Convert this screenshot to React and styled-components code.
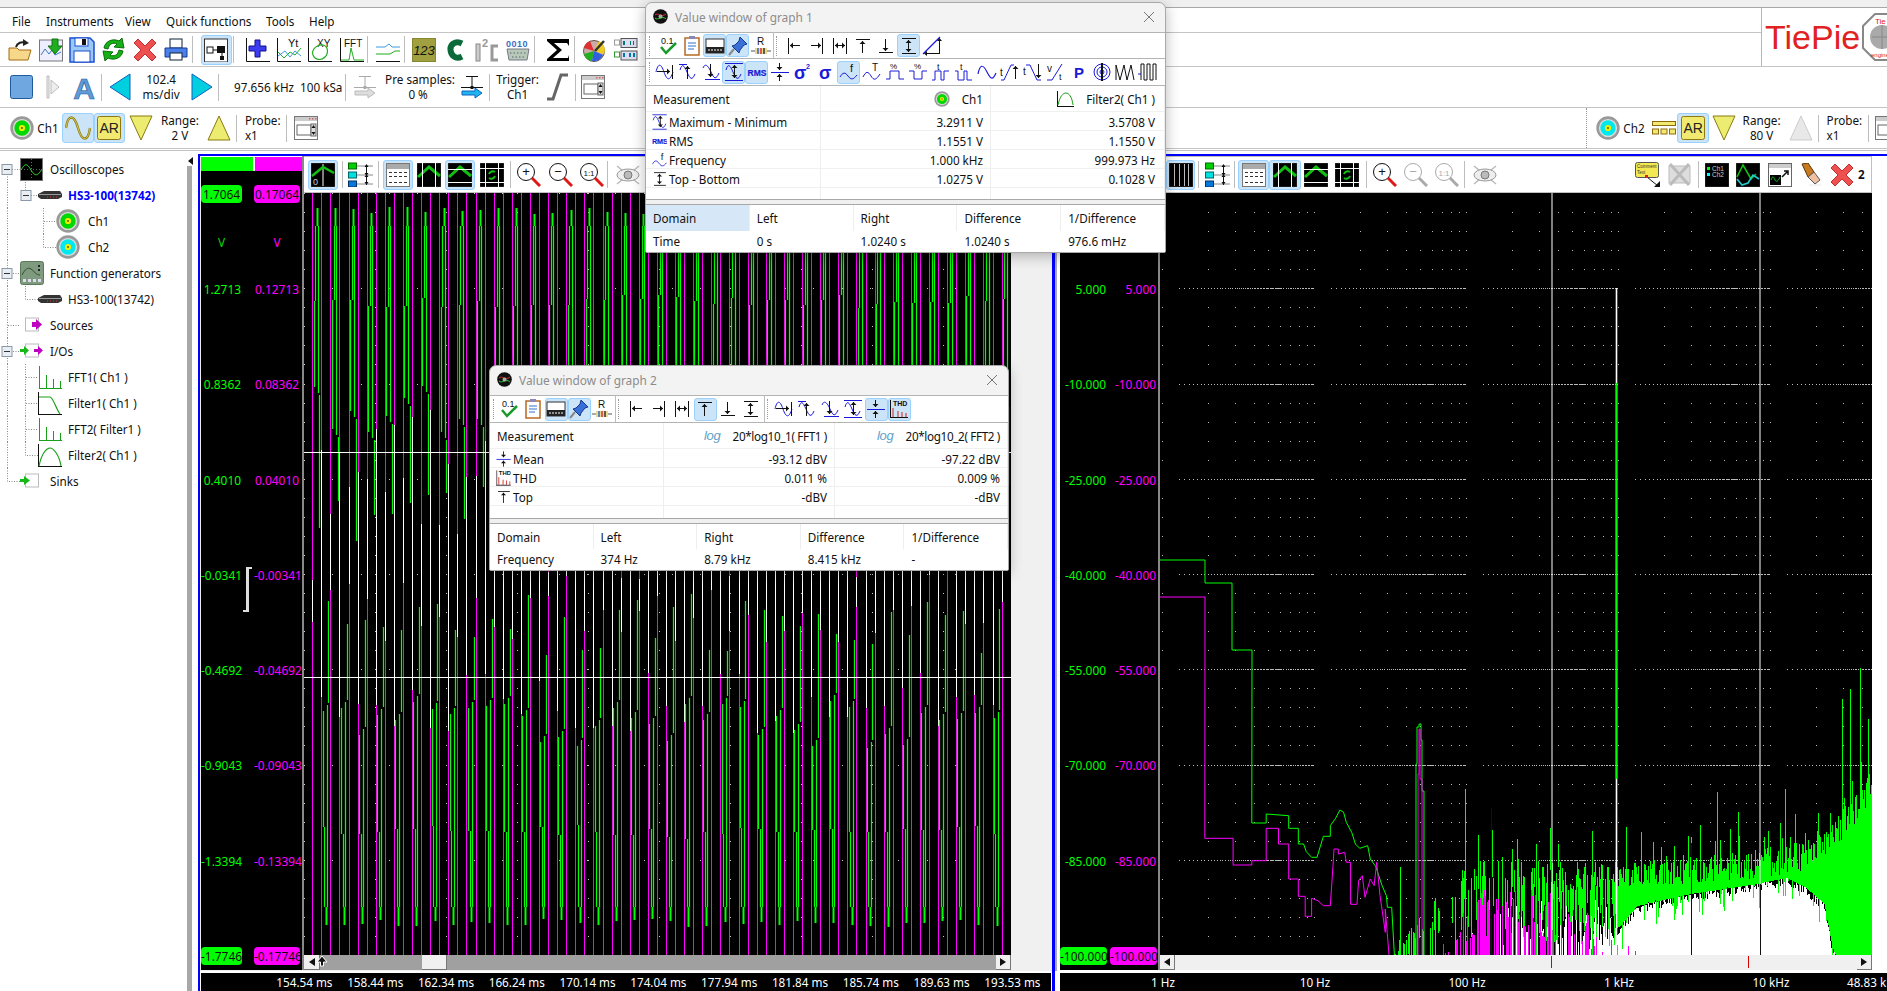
import React from 'react'
import styled, { createGlobalStyle } from 'styled-components'

const GlobalStyle = createGlobalStyle`
  * { box-sizing: border-box; }
  html, body { margin: 0; padding: 0; background: #fff; }
  body { width: 1887px; height: 991px; overflow: hidden; font: 11.7px "Noto Sans", "Open Sans", sans-serif; color: #111; }
  svg text { font-family: "Liberation Sans", sans-serif; }
`

// ---- small drawing helpers ----
const Svg = styled.svg`
  display: block;
  flex: none;
`
const I = ({ s = 24, w = s, h = s, children }) => (
  <Svg width={w} height={h} viewBox={`0 0 ${w} ${h}`} fill="none">{children}</Svg>
)
const BLUE = '#1a1ad8'
const arrowV = (x, y1, y2, c = '#111') => {
  const d = y2 > y1 ? -3 : 3
  return <g key={`v${x}${y1}${y2}`}><path stroke={c} d={`M${x + .5} ${y1}V${y2}`} /><path fill={c} d={`M${x - 2.5} ${y2 + d}H${x + 3.5}L${x + .5} ${y2}z`} /></g>
}
const arrowH = (y, x1, x2, c = '#111') => {
  const d = x2 > x1 ? -3 : 3
  return <g key={`h${y}${x1}${x2}`}><path stroke={c} d={`M${x1} ${y + .5}H${x2}`} /><path fill={c} d={`M${x2 + d} ${y - 2.5}V${y + 3.5}L${x2} ${y + .5}z`} /></g>
}

const Knob = ({ c, s = 24 }) => (
  <I s={s}>
    <circle cx={s / 2} cy={s / 2} r={s / 2 - .3} fill="#999" />
    <circle cx={s / 2} cy={s / 2} r={s * .38} fill="#ddd" />
    <circle cx={s / 2} cy={s / 2} r={s * .32} fill={c} />
    <circle cx={s / 2} cy={s / 2} r={s * .13} fill="#ee0" />
    <circle cx={s / 2} cy={s / 2} r={s * .04} fill="#550" />
  </I>
)
const WinIcon = () => (
  <I s={25}>
    <rect x=".5" y=".5" width="23" height="23" fill="#fff" stroke="#777" />
    <rect x="1" y="1" width="22" height="4" fill="#ccc" />
    <path fill="#c66" d="M15 2h1.5v1.5H15zM18 2h1.5v1.5H18zM21 2h1.5v1.5H21z" />
    <rect x="3" y="9" width="14" height="10" stroke="#666" />
    <rect x="17" y="8" width="5" height="12" fill="#ddd" stroke="#666" />
    <path fill="#111" d="M19.5 9l2 3h-4zM19.5 19l-2-3h4z" />
  </I>
)
const ScopeT = ({ blue }) => (
  <I s={24}>
    <path stroke={blue ? '#111' : '#aaa'} d="M6 1.5h12M12 2v11" />
    <path stroke={blue ? '#111' : '#aaa'} d="M1 12.5h22" />
    <rect x="10.5" y="11" width="3" height="3" fill={blue ? '#111' : '#aaa'} />
    <path fill={blue ? '#1eb4f0' : '#ddd'} stroke={blue ? '#1060c0' : '#bbb'} d="M2 16h13v-3l7 5-7 5v-3H2z" />
  </I>
)
const TriDown = ({ off }) => (
  <I w={24} h={26}><path d="M1 1H23L12 25z" fill={off ? '#e8e8e8' : '#ecec70'} stroke={off ? '#ccc' : '#8a7a10'} /></I>
)
const TriUp = ({ off }) => (
  <I w={24} h={26}><path d="M1 25H23L12 1z" fill={off ? '#e8e8e8' : '#ecec70'} stroke={off ? '#ccc' : '#8a7a10'} /></I>
)
const ARIcon = () => (
  <I s={24}>
    <rect x=".5" y=".5" width="23" height="23" rx="2" fill="#f2ea70" stroke="#8a7a10" />
    <text x="2.5" y="17" fontSize="14" fill="#222">AR</text>
  </I>
)
const RedX = ({ s = 24 }) => (
  <I s={s}>
    <path fill="#ee5050" stroke="#c03030" transform={`scale(${s / 24})`} d="M5 1l7 7 7-7 4 4-7 7 7 7-4 4-7-7-7 7-4-4 7-7-7-7z" />
  </I>
)

const Axes = ({ children }) => (
  <I s={24}><path stroke="#111" d="M.5 0V23.5H24" />{children}</I>
)
const BlackBox = ({ children }) => (
  <I s={24}><rect width="24" height="24" fill="#000" stroke="#666" strokeWidth=".5" />{children}</I>
)
const ZIG = <path stroke="#12c012" strokeWidth="3" d="M1 14L12 4L23 13" />
const Zoom = ({ off, label }) => (
  <I s={25}>
    <circle cx="10" cy="10" r="8.5" fill="#fff" stroke={off ? '#aaa' : '#111'} />
    <path stroke={off ? '#aaa' : '#e01818'} strokeWidth="3" d="M16 16l8 8" />
    <text x="10" y="14" textAnchor="middle" fontSize={label.length > 1 ? 8 : 13} fill={off ? '#aaa' : '#111'}>{label}</text>
  </I>
)
const Eye = () => (
  <I s={24}>
    <path stroke="#bbb" strokeWidth="1.5" d="M1 3l22 18M23 3L1 21" />
    <ellipse cx="12" cy="12" rx="11" ry="6" stroke="#999" fill="#eee" />
    <circle cx="12" cy="12" r="4" fill="#bbb" stroke="#777" />
  </I>
)
const Legend = () => (
  <I s={25}>
    <rect x="0.5" y="1" width="8" height="6" fill="#00d000" stroke="#060" />
    <rect x="0.5" y="10" width="8" height="6" fill="#00e0e0" stroke="#066" />
    <rect x="0.5" y="19" width="8" height="6" fill="#0878d8" stroke="#036" />
    <path stroke="#888" d="M9 4h16M9 13h16M9 22h16" />
    <path stroke="#111" d="M18.5 3v20" />
    <path fill="#111" d="M16.5 5h4l-2-3zM16.5 11h4l-2 3zM16.5 15h4l-2-3zM16.5 20h4l-2 3z" />
  </I>
)
const TableIcon = () => (
  <I s={24}>
    <rect x=".5" y=".5" width="23" height="23" fill="#fff" stroke="#777" />
    <rect x="1" y="1" width="22" height="5" fill="#aaa" />
    <path stroke="#333" strokeDasharray="3 2" d="M3 9.5h19M3 13.5h19M3 19.5h19" />
  </I>
)

const icons = {
  open: (
    <I s={24}>
      <path fill="#f7d78a" stroke="#a56a14" d="M1 10h8l2 2h12l-3 10H1z" />
      <path stroke="#222" strokeWidth="2" d="M8 9c1-4 6-6 9-4" />
      <path fill="#222" d="M15 1l6 4-6 3z" />
    </I>
  ),
  saveChart: (
    <I s={24}>
      <rect x=".5" y="2" width="23" height="21" fill="#eef" stroke="#777" />
      <path stroke="#3a7abf" d="M2 17l4-6 4 5 3-4 3 5 6-3" />
      <path fill="#1fae1f" stroke="#127012" d="M13 1h6v7h4l-7 8-7-8h4z" />
    </I>
  ),
  save: (
    <I s={26}>
      <path fill="#9cc8f5" stroke="#1a4fd0" strokeWidth="1.5" d="M1 1H21L25 5V25H1z" />
      <rect x="6" y="1" width="13" height="8" fill="#fff" stroke="#1a4fd0" />
      <rect x="13" y="2" width="4" height="6" fill="#111" />
      <rect x="5" y="14" width="16" height="11" fill="#fff" stroke="#1a4fd0" />
    </I>
  ),
  refresh: (
    <I s={25}>
      <path fill="#16b016" stroke="#0b6f0b" d="M3 11C4 4 12 1 18 4l3-3 2 10-10-1 3-3C12 5 8 7 7 12z" />
      <path fill="#16b016" stroke="#0b6f0b" d="M22 14c-1 7-9 10-15 7l-3 3-2-10 10 1-3 3c4 2 8 0 9-5z" />
    </I>
  ),
  print: (
    <I s={24}>
      <rect x="6" y="1" width="12" height="9" fill="#fff" stroke="#123" />
      <path fill="#4a80e8" stroke="#123a90" d="M1 10H23V19H1z" />
      <rect x="6" y="15" width="12" height="7" fill="#fff" stroke="#123" />
    </I>
  ),
  nodes: (
    <I s={24}>
      <rect x=".5" y="1" width="23" height="23" fill="#fff" stroke="#333" />
      <rect x="3" y="9" width="6" height="6" fill="#fff" stroke="#111" />
      <rect x="13" y="8" width="8" height="7" fill="#111" />
      <path stroke="#111" d="M9 12h4M18 15v4" />
      <rect x="16" y="18" width="4" height="4" fill="#111" />
    </I>
  ),
  plus: <Axes><path fill="#3b3bf0" stroke="#10108a" d="M9 2h5v6h6v5h-6v6H9v-6H3V8h6z" /></Axes>,
  yt: <Axes><text x="11" y="9" fontSize="11" fill="#111">Yt</text><path stroke="#1fae1f" d="M1 14l6 6 6-6 5 3 6-7" /><path stroke="#3a9ae0" d="M1 18l7-5 5 6 5-6 6 5" /></Axes>,
  xy: <Axes><text x="9" y="9" fontSize="10" fill="#111">XY</text><path stroke="#1fae1f" strokeWidth="1.2" d="M5 17C3 11 10 6 15 7s6 8 2 12-10 3-12-2z" /></Axes>,
  fft: <Axes><text x="4" y="9" fontSize="10" fill="#111">FFT</text><path stroke="#1fae1f" d="M1 22h8l2-12 3 12h10" /></Axes>,
  lines: (
    <I s={24}>
      <path stroke="#111" d="M0 23.5h24" />
      <path stroke="#3a9ae0" d="M0 9h9l4-3 3 3h8" />
      <path stroke="#1fae1f" d="M0 16h14l5-3h5" />
    </I>
  ),
  seg: (
    <I s={24}>
      <rect width="24" height="24" rx="2" fill="#a0a040" stroke="#6f6f20" />
      <text x="12" y="17" textAnchor="middle" fontSize="13" fontStyle="italic" fill="#111">123</text>
    </I>
  ),
  canC: <I w={17} h={24}><path stroke="#0c6a3a" strokeWidth="6" d="M15 5.5C8 2 3 7 3.5 12S8 22 15 18.5" /></I>,
  i2c: (
    <I s={26}>
      <rect x="2" y="7" width="4" height="17" fill="#ccc" stroke="#888" />
      <path stroke="#999" strokeWidth="3" d="M24 9h-6v14h6" />
      <text x="8" y="10" fontSize="11" fontWeight="bold" fill="#999">2</text>
    </I>
  ),
  serial: (
    <I s={24}>
      <text x="0" y="9" fontSize="9" fontWeight="bold" fill="#3a70c0" letterSpacing=".5">0010</text>
      <path fill="#b8c8b8" stroke="#778" d="M1 11H23L21 22H3z" />
      <path stroke="#567" strokeDasharray="1.5 2" d="M4 15h16M6 19h12" />
    </I>
  ),
  sigma: <I s={24}><path fill="#000" d="M1 1H23V8L21 5H8l8 7-9 8h15l1-3v6H1V21l10-9L1 3z" /></I>,
  palette: (
    <I s={24}>
      <circle cx="11" cy="13" r="10.5" fill="#caa" stroke="#654" />
      <path fill="#e03030" d="M11 13L1 10a10 10 0 0 1 6-7z" />
      <path fill="#20b020" d="M11 13L1 16a10 10 0 0 0 8 7z" />
      <path fill="#3060e0" d="M11 13l9 4a10 10 0 0 1-11 6z" />
      <path fill="#eecc20" d="M11 13l5-10a10 10 0 0 1 5 13z" />
      <path stroke="#333" strokeWidth="2.5" d="M12 13l9-10" />
    </I>
  ),
  chanList: (
    <I s={24}>
      <rect x=".5" y="2" width="5" height="5" stroke="#999" fill="#fff" />
      <rect x="7" y=".5" width="16" height="9" fill="#dde" stroke="#555" />
      <path fill="#077" d="M9 3h2v4H9zM16 3h1v4h-1zM19 3h1v4h-1z" />
      <rect x=".5" y="14" width="5" height="5" stroke="#393" fill="#fff" />
      <rect x="7" y="13" width="16" height="9" fill="#dde" stroke="#555" />
      <path fill="#07a" d="M9 15h2v4H9zM15 15h2v4h-2zM19 15h2v4h-2z" />
    </I>
  ),
  stop: <I s={24}><rect x=".5" y=".5" width="22" height="23" rx="2" fill="#6fa8e0" stroke="#1f5a9a" /></I>,
  play: <I w={14} h={24}><path fill="#eee" stroke="#bbb" d="M1 1h2v22H1zM5 5l8 7-8 7z" /></I>,
  bigA: <I s={30}><text x="15" y="27" textAnchor="middle" fontSize="30" fontWeight="bold" fill="#5e9ad6" stroke="#1f5a9a" strokeWidth=".6">A</text></I>,
  left: <I w={22} h={28}><path d="M21 1V27L1 14z" fill="#00cfe0" stroke="#1060c0" /></I>,
  right: <I w={22} h={28}><path d="M1 1V27L21 14z" fill="#00cfe0" stroke="#1060c0" /></I>,
  slope: <I w={22} h={28}><path stroke="#666" strokeWidth="3" d="M1 26h6L15 2h7" /></I>,
  wave: <I s={26}><path stroke="#8a7a10" strokeWidth="2.4" d="M1 13C3 -1 9 -1 13 13S23 27 25 13" /><path stroke="#f0e060" strokeWidth=".8" d="M1 13C3 -1 9 -1 13 13S23 27 25 13" /></I>,
  fold: (
    <I w={24} h={14}>
      <rect x=".5" y=".5" width="23" height="4" fill="#f2ea70" stroke="#8a6a10" />
      <rect x=".5" y="8" width="6" height="5" fill="#f2ea70" stroke="#8a6a10" />
      <rect x="9" y="8" width="6" height="5" fill="#f2ea70" stroke="#8a6a10" />
      <rect x="17.5" y="8" width="6" height="5" fill="#f2ea70" stroke="#8a6a10" />
    </I>
  ),
  scope0: <BlackBox><path stroke="#fff" d="M12 1v22" /><path stroke="#12c012" strokeWidth="2.5" d="M1 13L12 4l11 6" /><text x="2" y="22" fontSize="9" fill="#ccc">0</text></BlackBox>,
  vLines: <BlackBox>{ZIG}<path stroke="#fff" d="M5.5 0v24M18.5 0v24" /></BlackBox>,
  hLines: <BlackBox>{ZIG}<path stroke="#fff" d="M0 6.5h24M0 19.5h24" /></BlackBox>,
  boxLines: <BlackBox><path stroke="#fff" d="M0 5.5h24M0 19.5h24M5.5 0v24M18.5 0v24" /><path stroke="#12c012" strokeWidth="2" d="M15 9a4 4 0 0 0-6 2M9 15a4 4 0 0 0 6-2" /></BlackBox>,
  bars: <BlackBox><path stroke="#bbb" d="M5.5 1v22M10.5 1v22M15.5 1v22M19.5 1v22" /></BlackBox>,
  comment: (
    <I s={26}>
      <rect x=".5" y=".5" width="23" height="15" rx="2" fill="#f2ea50" stroke="#555" />
      <text x="2" y="6" fontSize="4.5" fill="#333">Comment</text>
      <text x="2" y="12" fontSize="4.5" fill="#333">Text</text>
      <path stroke="#111" d="M12 15l11 9" />
      <path fill="#111" d="M19 25h6v-6z" />
      <rect x="10" y="13" width="3" height="3" fill="#e02020" />
    </I>
  ),
  greyX: <I s={25}><rect x="2" y="4" width="21" height="17" fill="#ddd" stroke="#bbb" /><path stroke="#bbb" strokeWidth="3" d="M3 2l19 21M22 2L3 23" /></I>,
  chList: <BlackBox><rect x="2" y="4" width="3" height="3" fill="#0f0" /><rect x="2" y="10" width="3" height="3" fill="#0ff" /><text x="7" y="8" fontSize="6.5" fill="#ccc">Ch1</text><text x="7" y="14" fontSize="6.5" fill="#ccc">Ch2</text></BlackBox>,
  waves: <BlackBox><path stroke="#12c012" strokeWidth="1.6" d="M1 14L7 2l8 14 5-5" /><path stroke="#20d0d0" strokeWidth="1.6" d="M1 16l5 6 6-2 5-8 6 4" /></BlackBox>,
  winArrow: (
    <I s={24}>
      <rect x=".5" y=".5" width="23" height="23" fill="#fff" stroke="#666" />
      <rect x="1" y="1" width="22" height="4" fill="#ccc" />
      <rect x="2" y="12" width="11" height="10" fill="#000" />
      <path stroke="#12c012" d="M3 17c2-6 3-2 4 0s3 2 5-3" />
      <path stroke="#111" strokeWidth="1.5" d="M14 14l6-6M16 8h4v4" />
    </I>
  ),
  eraser: (
    <I s={24}>
      <path fill="#c87a20" stroke="#5a3508" d="M3 1l6-1 6 9-6 5z" />
      <path fill="#f0c0a0" stroke="#555" d="M9 14l6-5 6 8-5 4z" />
      <path stroke="#e8e8e8" d="M10 22h12" />
    </I>
  ),
}

// value window icons, 20 x 20
const M = ({ children }) => <I s={20}>{children}</I>
const SINE = 'M1 10C3 1 6 1 9 10s6 9 9 0'
const vicons = {
  check: <M><text x="2" y="8" fontSize="9" fill="#111">0.1</text><path stroke="#1a9a2a" strokeWidth="2.5" d="M2 11l5 6 10-10" /></M>,
  clip: <M><rect x="3" y="2" width="14" height="17" fill="#fff" stroke="#b86a20" strokeWidth="1.5" /><rect x="7" y="0" width="6" height="3" fill="#88b" /><path stroke="#3070d0" d="M6 7h8M6 10h8M6 13h6" /></M>,
  kbd: <M><rect x="1" y="3" width="18" height="14" fill="#fff" stroke="#333" /><rect x="1" y="11" width="18" height="6" fill="#222" /><path stroke="#fff" strokeDasharray="2 1" d="M3 14h14" /></M>,
  pin: <M><path fill="#3b6fd8" stroke="#123a90" d="M12 1l7 7-3 1-4 5-1 3-7-7 3-1 4-4z" /><path stroke="#888" strokeWidth="2" d="M6 13l-5 6" /></M>,
  res: <M><text x="6" y="9" fontSize="10" fill="#111">R</text><path stroke="#555" d="M0 15h20" /><rect x="4" y="12" width="12" height="6" fill="#e8d890" /><path stroke="#36c" strokeWidth="1.5" d="M7 12v6" /><path stroke="#d33" strokeWidth="1.5" d="M10 12v6" /><path stroke="#333" strokeWidth="1.5" d="M13 12v6" /></M>,
  curL: <M><path stroke="#111" d="M4.5 2v16" />{arrowH(9, 16, 6)}</M>,
  curR: <M><path stroke="#111" d="M15.5 2v16" />{arrowH(9, 4, 14)}</M>,
  curLR: <M><path stroke="#111" d="M3.5 2v16M16.5 2v16" />{arrowH(9, 10, 5)}{arrowH(9, 10, 15)}</M>,
  curT: <M><path stroke="#111" d="M3 3.5h14" />{arrowV(9, 17, 5)}</M>,
  curB: <M><path stroke="#111" d="M3 16.5h14" />{arrowV(9, 3, 15)}</M>,
  curTB: <M><path stroke="#111" d="M3 2.5h14M3 17.5h14" />{arrowV(9, 10, 4)}{arrowV(9, 10, 16)}</M>,
  slope: <M><path stroke={BLUE} strokeWidth="1.2" d="M1 18L18 1" /><path stroke="#111" d="M5 17.5h13M17.5 5v13" /><path fill="#111" d="M5 15v5l-3-2.5zM15 5h5l-2.5-3z" /></M>,
  level: <M><path stroke={BLUE} d={SINE} />{arrowH(9, 2, 15)}<path stroke="#111" d="M17.5 3v14" /></M>,
  max: <M><path stroke={BLUE} d="M1 2.5h8" /><path stroke={BLUE} d="M2 8C4 1 6 3 9 10s5 9 8 2" />{arrowV(9, 17, 4)}</M>,
  min: <M><path stroke={BLUE} d="M2 6c2-5 5-3 8 4s5 8 8 1" /><path stroke={BLUE} d="M4 17.5h15" />{arrowV(9, 2, 15)}</M>,
  maxmin: <M><path stroke={BLUE} d="M1 1.5h18M1 18.5h18" /><path stroke={BLUE} d="M2 8C4 1 6 3 9 10s5 9 8 2" />{arrowV(10, 10, 3)}{arrowV(10, 10, 16)}</M>,
  rms: <M><text x="10" y="14" textAnchor="middle" fontSize="8.5" fontWeight="bold" fill={BLUE} stroke={BLUE} strokeWidth=".2">RMS</text></M>,
  mean: <M><path stroke={BLUE} d="M1 10.5h18" />{arrowV(9, 1, 8)}{arrowV(9, 19, 12)}</M>,
  sigma2: <M><text x="1" y="17" fontSize="18" fontWeight="bold" fill={BLUE}>σ</text><text x="13" y="7" fontSize="7" fontWeight="bold" fill={BLUE}>2</text></M>,
  sigma: <M><text x="3" y="17" fontSize="18" fontWeight="bold" fill={BLUE}>σ</text></M>,
  freq: <M><path stroke={BLUE} d="M1 15c3-5 5-5 8-1s5 4 9-1" /><text x="11" y="10" fontSize="11" fill="#111">f</text></M>,
  period: <M><path stroke={BLUE} d="M1 15c3-6 5-6 8-1s5 4 9-2" /><text x="10" y="9" fontSize="10" fill="#111">T</text></M>,
  duty: <M><path stroke={BLUE} d="M1 17h4V9h9v8h5" /><text x="5" y="7" fontSize="8" fill="#111">%</text></M>,
  dutyN: <M><path stroke={BLUE} d="M1 9h5v8h8V9h5" /><text x="6" y="7" fontSize="8" fill="#111">%</text></M>,
  pulseT: <M><path stroke={BLUE} d="M1 18h3V9h6v9h3V9h5" /><text x="6" y="8" fontSize="9" fill="#111">t</text></M>,
  pulseB: <M><path stroke={BLUE} d="M1 9h3v9h6V9h3v9h5" /><text x="6" y="8" fontSize="9" fill="#111">t</text></M>,
  sine: <M><path stroke={BLUE} strokeWidth="1.2" d="M1 12C3 2 6 2 10 10s6 8 9 1" /></M>,
  rise: <M><path stroke={BLUE} d="M1 18h3L11 3h3" /><text x="0" y="14" fontSize="10" fill="#111">t</text>{arrowV(15, 17, 4)}</M>,
  fall: <M><path stroke={BLUE} d="M3 3h4l7 15h4" /><text x="0" y="13" fontSize="10" fill="#111">t</text>{arrowV(15, 2, 16)}</M>,
  slew: <M><path stroke={BLUE} d="M1 18h5L16 2" /><text x="1" y="10" fontSize="10" fill="#111">v</text><text x="13" y="18" fontSize="9" fill="#111">t</text></M>,
  power: <M><text x="10" y="16" textAnchor="middle" fontSize="15" fontWeight="bold" fill={BLUE}>P</text></M>,
  spectrum: <M><circle cx="10" cy="10" r="8" stroke={BLUE} /><circle cx="10" cy="10" r="5" stroke={BLUE} /><circle cx="10" cy="10" r="2" stroke={BLUE} /><path stroke="#111" strokeWidth="2" d="M10 1v18" /></M>,
  burst: <M><path stroke="#111" d="M1 18V3l4 15 4-15 3 15 4-15 3 15" /></M>,
  squares: <M><path stroke={BLUE} d="M0 12h3" /><path stroke="#111" d="M3 18V2h3v16h3V2h3v16h3V2h3v16" /></M>,
  thd: <M><path stroke="#111" d="M1.5 1v18M1 18.5h18" /><text x="4" y="7" fontSize="7" fontWeight="bold" fill="#111">THD</text><path stroke="#d02020" d="M4 9v9M9 12v6M13 13v5M17 14v4" /></M>,
}
const AppLogo = () => (
  <I s={15}>
    <circle cx="7.5" cy="7.5" r="7.3" fill="#111" />
    <path stroke="#e03030" d="M2 6c3-3 6 3 11-1" /><path stroke="#2fd02f" d="M2 9c3 3 7-3 11 1" />
    <circle cx="7.5" cy="7.5" r="2" fill="#aaa" />
  </I>
)

// ---- header ----
const Shell = styled.div`
  width: 1887px;
  height: 991px;
  position: relative;
  overflow: hidden;
  display: flex;
  flex-direction: column;
`
const TitleStrip = styled.div`
  height: 8px;
  background: #f0f0f0;
  border-bottom: 1px solid #a8a8a8;
  flex: none;
`
const TopBlock = styled.div`
  display: flex;
  height: 59px;
  flex: none;
`
const TopBars = styled.div`
  flex: 1;
  display: flex;
  flex-direction: column;
`
const MenuBar = styled.nav`
  height: 25px;
  border-bottom: 1px solid #c4c4c4;
  display: flex;
  align-items: center;
  padding: 2px 0 0 12px;
  flex: none;
`
const MenuItem = styled.span`
  width: ${p => p.$w}px;
  flex: none;
`
const Bar = styled.div`
  display: flex;
  align-items: center;
  height: ${p => p.$h}px;
  padding-left: ${p => p.$pad || 0}px;
  border-bottom: 1px solid #c4c4c4;
  flex: none;
`
const LogoPanel = styled.div`
  width: 126px;
  border-left: 1px solid #b8b8b8;
  border-bottom: 1px solid #c4c4c4;
  display: flex;
  align-items: center;
  padding-left: 3px;
  overflow: hidden;
  gap: 2px;
  flex: none;
`
const LogoText = styled.span`
  font: 34px "Liberation Sans", sans-serif;
  color: #e02222;
  line-height: 1;
`
const Tool = styled.div`
  width: ${p => p.$w || 31.3}px;
  height: ${p => p.$h || 30}px;
  display: flex;
  align-items: center;
  justify-content: center;
  flex: none;
  border-radius: 3px;
  margin-left: ${p => p.$ml || 0}px;
  background: ${p => (p.$on ? '#cce4f7' : 'transparent')};
  border: 1px solid ${p => (p.$on ? '#99d1ff' : 'transparent')};
`
const Sep = styled.div`
  width: 1px;
  height: 27px;
  background: #bdbdbd;
  flex: none;
  margin: 0 ${p => p.$r ?? 0}px 0 ${p => p.$l ?? 0}px;
`
const Stack = styled.div`
  width: ${p => p.$w}px;
  text-align: ${p => p.$align || 'center'};
  line-height: 15px;
  flex: none;
  white-space: nowrap;
  margin-left: ${p => p.$ml || 0}px;
`
const Fill = styled.div`
  flex: 1;
`
const RightChannel = styled.div`
  display: flex;
  align-items: center;
  width: 301px;
  height: 100%;
  border-left: 1px dotted #999;
  padding-left: 5px;
  overflow: hidden;
  flex: none;
`

// ---- tree ----
const Body = styled.div`
  flex: 1;
  display: flex;
  border-top: 1px solid #c4c4c4;
  margin-top: 1px;
  min-height: 0;
`
const TreePane = styled.div`
  width: 183px;
  padding-top: 5px;
  flex: none;
`
const TreeRow = styled.div`
  height: 26px;
  display: flex;
  align-items: center;
  white-space: nowrap;
`
const TreeLabel = styled.span`
  margin-left: ${p => p.$ml}px;
  font-weight: ${p => (p.$bold ? 700 : 400)};
  color: ${p => (p.$bold ? '#0000ff' : '#111')};
`
const Splitter = styled.div`
  width: 15px;
  flex: none;
  display: flex;
  flex-direction: column;
  align-items: flex-start;
  padding: 6px 0 0 4px;
`
const SplitterArrow = styled.div`
  width: 0;
  height: 0;
  border: 4px solid transparent;
  border-right: 5px solid #111;
  border-left: 0;
  margin-left: 1px;
`
const SplitterBar = styled.div`
  width: 5px;
  flex: 1;
  margin-top: 1px;
  background: #a8a8a8;
`
const Guide = ({ w, lines, box }) => (
  <Svg width={w} height={26} viewBox={`0 0 ${w} 26`}>
    <path d={lines} stroke="#888" strokeDasharray="1 1.5" fill="none" />
    {box !== undefined && (
      <g>
        <rect x={box - 5} y="8.5" width="10" height="10" fill="#e8eef4" stroke="#8a98a8" />
        <path stroke="#333" d={`M${box - 3} 13.5h6`} />
      </g>
    )}
  </Svg>
)
const Device = () => (
  <I w={24} h={10}>
    <path fill="#333" d="M0 4L6 1H22L24 4V7L20 9H3L0 7z" />
    <path stroke="#999" d="M1 4.5h22" />
    <path stroke="#d33" strokeDasharray="1 2" d="M9 7h10" />
  </I>
)
const ScopeIcon = () => (
  <I s={23}>
    <rect x=".5" y=".5" width="22" height="22" fill="#000" stroke="#777" />
    <path stroke="#666" strokeDasharray="1 2" d="M11.5 1v21M1 11.5h21" />
    <path stroke="#2fd02f" d="M1 12c4-7 6-7 10 0s7 6 11-1" />
  </I>
)
const GenIcon = () => (
  <I s={24}>
    <rect x=".5" y=".5" width="23" height="23" rx="2" fill="#7f9a7f" stroke="#5a7a5a" />
    <path stroke="#2f4f2f" d="M2 14c3-6 6-8 9-6s5 6 9 6" />
    <path fill="#dde" d="M3 18h3v3H3zM8 18h3v3H8zM13 18h3v3h-3zM18 18h3v3h-3z" />
    <path fill="#223" d="M18 4h2v2h-2zM18 8h2v2h-2z" />
  </I>
)
const IoBox = ({ c }) => (
  <I w={24} h={18}>
    <rect x="5.5" y="2" width="13" height="13" stroke="#bbb" fill="#fff" />
    <path fill={c} d="M12 6h4V3l6 5.5-6 5.5v-3h-4z" />
  </I>
)
const IoBoth = () => (
  <I w={24} h={18}>
    <rect x="5.5" y="2" width="13" height="13" stroke="#bbb" fill="#fff" />
    <path fill="#18b818" d="M0 7h4V4l5 4.5L4 13v-3H0z" />
    <path fill="#c000c0" d="M14 7h4V4l5 4.5-5 4.5v-3h-4z" />
  </I>
)
const SinkBox = () => (
  <I w={24} h={18}>
    <rect x="5.5" y="2" width="13" height="13" stroke="#bbb" fill="#fff" />
    <path fill="#18b818" d="M0 7h4V4l6 4.5L4 13v-3H0z" />
  </I>
)
const TreeFft = () => (
  <I w={24} h={24}><path stroke="#18a018" d="M1.5 1v22M1 23.5h23M8.5 10v14M15.5 14v10M22.5 16v8" /></I>
)
const TreeFilter = ({ band }) => (
  <I w={24} h={24}>
    <path stroke="#111" d="M.5 1v23M0 23.5h24" />
    <path stroke="#18a018" strokeWidth="1.2" d={band ? 'M1 23C4 9 9 5 12 5s9 6 11 18' : 'M1 6h11c3 0 6 12 10 17'} />
  </I>
)

const treeRows = [
  { w: 20, box: 7, lines: 'M7.5 13V26M12 13.5h8', icon: <ScopeIcon />, text: 'Oscilloscopes', ml: 7 },
  { w: 38, box: 26, lines: 'M7.5 0V26M25.5 0V8M31 13.5h7', icon: <Device />, text: 'HS3-100(13742)', ml: 6, bold: true },
  { w: 56, lines: 'M7.5 0V26M43.5 0V26M44 13.5h12', icon: <Knob c="#00d800" />, text: 'Ch1', ml: 8 },
  { w: 56, lines: 'M7.5 0V26M43.5 0V13.5H56', icon: <Knob c="#00e8f0" />, text: 'Ch2', ml: 8 },
  { w: 20, lines: 'M7.5 0V26M8 13.5h12', box: 7, icon: <GenIcon />, text: 'Function generators', ml: 6 },
  { w: 38, lines: 'M7.5 0V26M25.5 0V13.5H38', icon: <Device />, text: 'HS3-100(13742)', ml: 6 },
  { w: 20, lines: 'M7.5 0V26M8 13.5h18', icon: <IoBox c="#c000c0" />, text: 'Sources', ml: 6 },
  { w: 20, lines: 'M7.5 0V26M8 13.5h12', box: 7, icon: <IoBoth />, text: 'I/Os', ml: 6 },
  { w: 38, lines: 'M7.5 0V26M25.5 0V26M26 13.5h12', icon: <TreeFft />, text: 'FFT1( Ch1 )', ml: 6 },
  { w: 38, lines: 'M7.5 0V26M25.5 0V26M26 13.5h12', icon: <TreeFilter />, text: 'Filter1( Ch1 )', ml: 6 },
  { w: 38, lines: 'M7.5 0V26M25.5 0V26M26 13.5h12', icon: <TreeFft />, text: 'FFT2( Filter1 )', ml: 6 },
  { w: 38, lines: 'M7.5 0V26M25.5 0V13.5H38', icon: <TreeFilter band />, text: 'Filter2( Ch1 )', ml: 6 },
  { w: 20, lines: 'M7.5 0V13.5H20', icon: <SinkBox />, text: 'Sinks', ml: 6 },
]

// ---- graph frames ----
const GraphFrame = styled.section`
  width: ${p => (p.$w ? `${p.$w}px` : 'auto')};
  margin-top: 3px;
  border-top: 2px solid #0000ff;
  border-left: ${p => p.$bl}px solid #0000ff;
  background: #fff;
  display: flex;
  flex-direction: column;
  flex: ${p => (p.$w ? 'none' : 1)};
  min-width: 0;
`
const GraphMain = styled.div`
  display: flex;
  height: 815px;
  flex: none;
  padding-left: ${p => p.$pad}px;
  background: ${p => p.$bg};
`
const Axis = styled.div`
  width: ${p => p.$w}px;
  background: #000;
  border-right: 2px solid #888;
  flex: none;
  position: relative;
  height: 814px;
  display: flex;
  flex-direction: column;
`
const ChanBlocks = styled.div`
  display: grid;
  grid-template-columns: ${p => p.$cols};
  gap: 2px;
  height: 15px;
  margin-bottom: 14px;
  flex: none;
  background: #fff;
  padding-top: 1px;
`
const ChanBlock = styled.div`
  background: ${p => p.$c};
`
const AxisRow = styled.div`
  display: grid;
  grid-template-columns: ${p => p.$cols};
  column-gap: ${p => p.$gap}px;
  height: ${p => p.$h}px;
  margin-bottom: ${p => p.$mb || 0}px;
  flex: none;
  font-size: 11.9px;
`
const AxisText = styled.span`
  height: 18px;
  line-height: 18px;
  text-align: right;
  padding-right: 1px;
  color: ${p => p.$c};
  white-space: nowrap;
`
const UnitText = styled.span`
  height: 18px;
  line-height: 18px;
  text-align: center;
  color: ${p => p.$c};
`
const Pill = styled.span`
  height: 18px;
  line-height: 18px;
  text-align: center;
  background: ${p => p.$c};
  color: #111;
  border-radius: 4px;
  white-space: nowrap;
`
const Bracket = styled.div`
  position: absolute;
  left: 45px;
  top: 411px;
  width: 3px;
  height: 45px;
  background: #ddd;
  &::before, &::after { content: ''; position: absolute; width: 3px; height: 2px; background: #ddd; }
  &::before { top: 0; left: 3px; }
  &::after { bottom: 0; left: -3px; }
`
const PlotCol = styled.div`
  flex: 1;
  display: flex;
  flex-direction: column;
  min-width: 0;
`
const GraphToolbar = styled.div`
  height: 37px;
  flex: none;
  background: #fff;
  border: 1px solid #c0c0c0;
  border-left: 0;
  display: flex;
  align-items: center;
  padding-left: ${p => p.$pad}px;
  width: ${p => p.$w}px;
`
const PlotWrap = styled.div`
  width: ${p => p.$w}px;
  height: 762px;
  background: #000;
  flex: none;
`
const Scroll = styled.div`
  width: ${p => p.$w}px;
  height: 15px;
  background: ${p => p.$bg};
  display: flex;
  flex: none;
  position: relative;
`
const ScrollBtn = styled.div`
  width: ${p => p.$w}px;
  height: 15px;
  background: #f0f0f0;
  border-right: 1px solid #777;
  border-bottom: 1px solid #777;
  display: flex;
  align-items: center;
  justify-content: center;
  flex: none;
`
const ScrollThumb = styled(ScrollBtn)`
  margin-left: ${p => p.$ml}px;
`
const Tri = styled.span`
  width: 0;
  height: 0;
  border: 4px solid transparent;
  ${p => (p.$dir === 'l' ? 'border-right: 6px solid #111; border-left: 0;' : 'border-left: 6px solid #111; border-right: 0;')}
`
const Tick = styled.i`
  position: absolute;
  top: 1px;
  width: 1px;
  height: 12px;
  background: #d00;
  left: ${p => p.$x}px;
`
const MouseCursor = styled.svg`
  position: absolute;
  left: 12px;
  top: 0;
`
const TimeStrip = styled.div`
  height: 18px;
  margin-top: 2px;
  margin-left: ${p => p.$ml}px;
  padding-left: ${p => p.$pad}px;
  background: #000;
  color: #fff;
  display: flex;
  align-items: center;
  overflow: hidden;
  flex: none;
  width: ${p => p.$w}px;
`
const TimeLabel = styled.span`
  width: ${p => p.$w}px;
  text-align: ${p => p.$align || 'center'};
  flex: none;
  white-space: nowrap;
`

// ---- value windows ----
const ValueWin = styled.div`
  position: absolute;
  left: ${p => p.$x}px;
  top: ${p => p.$y}px;
  width: ${p => p.$w}px;
  height: ${p => p.$h}px;
  background: #f3f3f3;
  border: 1px solid #a9a9a9;
  border-radius: 7px 7px 2px 2px;
  box-shadow: 0 3px 14px rgba(0, 0, 0, .28);
  display: flex;
  flex-direction: column;
  overflow: hidden;
`
const WinTitle = styled.div`
  height: 29px;
  display: flex;
  align-items: center;
  padding: 0 10px 2px 7px;
  color: #8c8c8c;
  gap: 7px;
  flex: none;
  font-size: 11.9px;
`
const WinClose = styled.svg`
  margin-left: auto;
`
const WinBar = styled.div`
  height: ${p => p.$h}px;
  background: #fff;
  border-top: 1px solid #b4b4b4;
  display: flex;
  align-items: center;
  padding-left: 3px;
  flex: none;
`
const Dots = styled.div`
  width: 1px;
  height: 80%;
  border-left: 1px dotted #999;
  margin-right: ${p => p.$r}px;
  flex: none;
`
const WinBtn = styled(Tool)`
  width: ${p => p.$w || 23}px;
  height: ${p => p.$h || 23}px;
`
const MeasureHead = styled.div`
  display: grid;
  grid-template-columns: ${p => p.$cols};
  height: 25px;
  flex: none;
  background: #fff;
`
const MeasureRow = styled(MeasureHead)`
  height: 19px;
  border-top: 1px solid #f0f0f0;
`
const MeasureGrid = styled.div`
  height: ${p => p.$h}px;
  background: #fff;
  border-top: 1px solid #b4b4b4;
  flex: none;
  display: flex;
  flex-direction: column;
  overflow: hidden;
`
const NameCell = styled.div`
  display: flex;
  align-items: center;
  gap: 1px;
  padding-left: ${p => p.$pad}px;
  border-right: 1px solid #eee;
  white-space: nowrap;
`
const ValueCell = styled.div`
  display: flex;
  align-items: center;
  justify-content: flex-end;
  padding-right: ${p => p.$pad}px;
  border-right: 1px solid #eee;
  white-space: nowrap;
  letter-spacing: ${p => (p.$tight ? '-.35px' : 'normal')};
`
const HeadIcon = styled.span`
  display: flex;
  margin-right: ${p => p.$mr}px;
`
const RowIcon = styled.span`
  display: flex;
  width: 17px;
  overflow: hidden;
  justify-content: center;
  transform: scale(.85);
`
const WinSplit = styled.div`
  height: 6px;
  background: #f0f0f0;
  border-top: 1px solid #a8a8a8;
  border-bottom: 1px solid #a8a8a8;
  flex: none;
`
const CursorGrid = styled.div`
  flex: 1;
  background: #fff;
  display: grid;
  grid-template-columns: repeat(5, 1fr);
  grid-template-rows: ${p => p.$head}px 20px;
  align-items: center;
`
const CursorCell = styled.div`
  height: 100%;
  display: flex;
  align-items: center;
  padding-left: 7px;
  background: ${p => (p.$sel ? '#d6e8f7' : 'transparent')};
  border-right: ${p => (p.$head ? '1px solid #eee' : '0')};
`

// ---- traces ----
const rng = seed => () => {
  seed = (seed + 0x6d2b79f5) | 0
  let t = Math.imul(seed ^ (seed >>> 15), 1 | seed)
  t = (t + Math.imul(t ^ (t >>> 7), 61 | t)) ^ t
  return ((t ^ (t >>> 14)) >>> 0) / 4294967296
}
const lerp = (pts, x) => {
  if (x <= pts[0][0]) return pts[0][1]
  for (let i = 1; i < pts.length; i++) {
    if (x <= pts[i][0]) {
      const [a, b] = pts[i - 1]
      const [c, d] = pts[i]
      return b + ((d - b) * (x - a)) / (c - a)
    }
  }
  return pts[pts.length - 1][1]
}

function timeTraces() {
  const r = rng(7)
  let white = '', magenta = '', green = '', crest = ''
  for (let k = 0; k < 79; k++) {
    const x = Math.round(303.2 + 9.07 * k - 304) + 0.5
    white += `M${x} 0V762`
    const gapTop = k % 2 ? 260 + r() * 130 : 210 + r() * 90
    const gapBot = k % 2 ? 380 + r() * 70 : 480 + r() * 60
    magenta += `M${x} 0V${gapTop.toFixed(0)}M${x} ${gapBot.toFixed(0)}V762`
  }
  const seg = (x, a, b) => `M${Math.round(x) + .5} ${a.toFixed(0)}V${b.toFixed(0)}`
  for (let k = 0; k < 40; k++) {
    const p = 12.7 + 18.13 * k
    const t = p + 9.07
    const j = r() * 14
    const low = 285 + r() * 65
    const low2 = 190 + r() * 50
    const top = 13 + r() * 8
    const m = y => 747 - y
    green += seg(p - 3, 101 + j, low2) + seg(p - 1.3, 33, 101 + j) + seg(p + 1, 33, low2 + 6) + seg(p + 2.7, low2 + 8, low)
    crest += seg(p, top, 33)
    const j2 = r() * 14
    const low3 = 285 + r() * 65
    const low4 = 190 + r() * 50
    green += seg(t - 3, m(101 + j2), m(low4)) + seg(t - 1.3, m(33), m(101 + j2)) + seg(t + 1, m(33), m(low4 + 6)) + seg(t + 2.7, m(low4 + 8), m(low3))
    crest += seg(t, m(top), m(33))
  }
  return { white, magenta, green, crest }
}
const time = timeTraces()
const timeDots = (() => {
  let d = ''
  for (let c = 0; c < 10; c++) for (let y = 0; y < 41; y++) d += `M${71 * c} ${(19.05 * y).toFixed(0)}.5h1`
  for (let row = 0; row < 9; row++) for (let x = 0; x < 26; x++) d += `M${(28.3 * x).toFixed(0)} ${(95.25 * row).toFixed(0)}.5h1`
  return d
})()

const FX0 = 1160
const FY0 = 194
const xOf = f => 1162 + 152 * Math.log10(f) - FX0
function fftLayers() {
  const r = rng(21)
  const greenTop = [[1395, 950], [1420, 925], [1450, 885], [1480, 862], [1530, 866], [1560, 870], [1620, 868], [1700, 862], [1760, 858], [1800, 850], [1830, 830], [1850, 810], [1865, 790], [1872, 775]]
  const whiteTop = [[1590, 945], [1620, 925], [1637, 905], [1690, 893], [1745, 885], [1787, 877], [1806, 887], [1824, 903], [1832, 945], [1836, 956]]
  const magTop = [[1440, 930], [1480, 890], [1510, 885], [1540, 890], [1580, 905], [1600, 930], [1640, 950]]
  let g = '', w = '', m = ''
  for (let x = 1395; x < 1872; x++) {
    const px = x - FX0 + 0.5
    const wt = lerp(whiteTop, x)
    const dense = x > 1615
    if (dense || r() < (x > 1550 ? 0.8 : 0.5)) {
      let top = lerp(greenTop, x) + r() * 30 - 8
      if (r() < 0.12) top -= r() * 45
      const sink = r() < 0.25 ? r() * 28 : 2
      const bot = x > 1836 ? 956 : dense ? wt + sink : top + 18 + r() * 50
      g += `M${px} ${(top - FY0).toFixed(0)}V${(Math.min(bot, 956) - FY0).toFixed(0)}`
    }
    if (x > 1610) w += `M${px} ${(wt + r() * 10 - FY0).toFixed(0)}V762`
    else if (x > 1470 && r() < (x - 1450) / 170) w += `M${px} ${(900 + r() * 50 - FY0).toFixed(0)}V762`
    if (x > 1440 && x < 1640 && r() < 0.5) m += `M${px} ${(lerp(magTop, x) + r() * 50 - FY0).toFixed(0)}V762`
  }
  return { g, w, m }
}
const fft = fftLayers()
const at = (pts, mapX, mapY) => pts.map(([a, b]) => `L${mapX(a).toFixed(1)} ${mapY(b).toFixed(1)}`).join('')
const zx = px => 1050 + px / 1.873 - FX0
const zy = py => 780 + py / 3 - FY0
const greenFft = 'M0 367H45V390H72V457H92' + at([[378, 132], [405, 132], [405, 105], [447, 110], [447, 148], [465, 148], [465, 195], [475, 195], [480, 218], [490, 235], [500, 235], [512, 172], [525, 172], [525, 140], [535, 118], [543, 93], [550, 100], [555, 130], [565, 160], [572, 195], [580, 208], [595, 200], [600, 240], [610, 262], [622, 320], [630, 350], [632, 385], [640, 385], [645, 528]], zx, zy)
const magentaFft = 'M0 404H45' + at([[290, 178], [343, 178], [343, 258], [378, 258], [378, 245], [405, 245], [405, 148], [428, 148], [428, 195], [447, 195], [447, 300], [465, 300], [465, 352], [478, 352], [478, 412], [490, 412], [490, 358], [502, 365], [512, 380], [525, 380], [530, 260], [532, 210], [540, 210], [540, 225], [552, 220], [555, 250], [563, 250], [563, 376], [575, 376], [578, 305], [585, 290], [590, 355], [600, 300], [607, 320], [612, 250], [618, 350], [628, 460], [628, 390], [635, 528]], zx, zy)
const fftDots = (() => {
  let minor = ''
  let major = ''
  for (let dec = 0; dec < 5; dec++) {
    const base = 10 ** dec
    for (let m = 1; m < 10; m++) {
      const x = Math.round(xOf(base * m))
      if (x > 712) continue
      for (let y = 0; y < 41; y++) if (y % 5 !== 0) minor += `M${x} ${(19.05 * y).toFixed(0)}.5h1`
    }
    for (let m = 1.3; m < 10; m += m < 6 ? 0.1 : 0.2) {
      const x = Math.round(xOf(base * m))
      if (x > 712) continue
      for (let row = 1; row < 8; row++) major += `M${x} ${(95.25 * row).toFixed(0)}.5h1`
    }
  }
  return { minor, major }
})()
const hSpikes = [[1465, 790], [1491, 809], [1400, 868], [1517, 840], [1536, 845], [1592, 832], [1717, 793], [1785, 790], [1795, 815], [1860, 669], [1842, 700], [1850, 690], [1868, 720], [1730, 830]]
const spikePath = hSpikes.map(([x, y]) => `M${x - FX0 + .5} ${y - FY0}V${x > 1600 ? 880 - FY0 : 956 - FY0}`).join('')

const TimePlot = () => (
  <Svg width={707} height={762} viewBox="0 0 707 762">
    <path d={timeDots} stroke="#ccc" />
    <path d={time.white} stroke="#fff" />
    <path d={time.magenta} stroke="#ff00ff" />
    <path d={time.green} stroke="#00ff00" strokeWidth="1.25" fill="none" />
    <path d={time.crest} stroke="#00ff00" strokeWidth="2" fill="none" />
    <path d="M0 259.5H707M0 484.5H707" stroke="#fff" />
  </Svg>
)
const FftPlot = () => (
  <Svg width={712} height={762} viewBox="0 0 712 762">
    <path d={fftDots.minor} stroke="#bbb" />
    <path d={fftDots.major} stroke="#bbb" />
    <path d={fft.w} stroke="#fff" />
    <path d={fft.g} stroke="#00ff00" />
    <path d={fft.m} stroke="#ff00ff" />
    <path d={spikePath} stroke="#00ff00" />
    <path d="M331.5 615V762M531.5 650V762M600.5 691V762" stroke="#111" />
    <path d="M392 0V762M600 0V691" stroke="#fff" />
    <path d="M456.5 95V762" stroke="#fff" strokeWidth="1.6" />
    <path d="M456.5 190V586" stroke="#00ff00" strokeWidth="1.6" />
    <path d={greenFft} stroke="#00ff00" fill="none" />
    <path d={magentaFft} stroke="#ff00ff" fill="none" />
    <path d="M256 762V571H257V534H259V531H261V547H262V598H264V762" stroke="#00ff00" fill="none" />
    <path d="M258 762V581H259V536H260V586H262V762" stroke="#ff00ff" fill="none" />
  </Svg>
)

const leftScale = [
  ['1.2713', '0.12713'], ['0.8362', '0.08362'], ['0.4010', '0.04010'], ['-0.0341', '-0.00341'],
  ['-0.4692', '-0.04692'], ['-0.9043', '-0.09043'], ['-1.3394', '-0.13394'],
]
const rightScale = [
  ['5.000', '5.000'], ['-10.000', '-10.000'], ['-25.000', '-25.000'], ['-40.000', '-40.000'],
  ['-55.000', '-55.000'], ['-70.000', '-70.000'], ['-85.000', '-85.000'],
]
const leftTimes = ['154.54 ms', '158.44 ms', '162.34 ms', '166.24 ms', '170.14 ms', '174.04 ms', '177.94 ms', '181.84 ms', '185.74 ms', '189.63 ms', '193.53 ms']
const rightTimes = ['1 Hz', '10 Hz', '100 Hz', '1 kHz', '10 kHz']

const AxisColumn = ({ w, cols, gap, blocks, top, bottom, scale, children }) => (
  <Axis $w={w}>
    <ChanBlocks $cols={blocks}>
      <ChanBlock $c="#00ff00" />
      <ChanBlock $c="#ff00ff" />
    </ChanBlocks>
    <AxisRow $cols={cols} $gap={gap} $h={18} $mb={30}>
      <Pill $c="#00ff00">{top[0]}</Pill>
      <Pill $c="#ff00ff">{top[1]}</Pill>
    </AxisRow>
    <AxisRow $cols={cols} $gap={gap} $h={18} $mb={29}>
      <UnitText $c="#00d800">V</UnitText>
      <UnitText $c="#ff00ff">V</UnitText>
    </AxisRow>
    {scale.map(([a, b]) => (
      <AxisRow $cols={cols} $gap={gap} $h={95.25} key={a}>
        <AxisText $c="#00ff00">{a}</AxisText>
        <AxisText $c="#ff00ff">{b}</AxisText>
      </AxisRow>
    ))}
    <AxisRow $cols={cols} $gap={gap} $h={18}>
      <Pill $c="#00ff00">{bottom[0]}</Pill>
      <Pill $c="#ff00ff">{bottom[1]}</Pill>
    </AxisRow>
    {children}
  </Axis>
)

const LogMark = () => (
  <I w={18} h={16}><text x="0" y="12" fontSize="13" fontStyle="italic" fill="#5f9fc8" fontFamily="Liberation Serif">log</text></I>
)
const TEXT_ROWS = {
  one: {
    cols: '175px 170px 174px',
    heads: [
      ['Ch1', <Knob key="k" c="#00d800" s={16} />, 12],
      ['Filter2( Ch1 )', <I s={17} key="f"><path stroke="#111" d="M.5 1v16M0 16.5h17" /><path stroke="#18a018" d="M1 15C3 6 6 3 9 3s6 4 7 12" /></I>, 12],
    ],
    rows: [
      ['maxmin', 'Maximum - Minimum', '3.2911 V', '3.5708 V'],
      ['rms', 'RMS', '1.1551 V', '1.1550 V'],
      ['freq', 'Frequency', '1.000 kHz', '999.973 Hz'],
      ['curTB', 'Top - Bottom', '1.0275 V', '0.1028 V'],
    ],
    pads: [7, 9],
  },
  two: {
    cols: '174px 171px 173px',
    heads: [
      ['20*log10_1( FFT1 )', <LogMark key="l" />, 11, true],
      ['20*log10_2( FFT2 )', <LogMark key="l2" />, 11, true],
    ],
    rows: [
      ['mean', 'Mean', '-93.12 dBV', '-97.22 dBV'],
      ['thd', 'THD', '0.011 %', '0.009 %'],
      ['curT', 'Top', '-dBV', '-dBV'],
    ],
    pads: [7, 7],
  },
}

const Measurements = ({ data, h }) => (
  <MeasureGrid $h={h}>
    <MeasureHead $cols={data.cols}>
      <NameCell $pad={7}>Measurement</NameCell>
      {data.heads.map(([t, ic, mr, tight], i) => (
        <ValueCell $pad={data.pads[i]} $tight={tight} key={t}><HeadIcon $mr={mr}>{ic}</HeadIcon>{t}</ValueCell>
      ))}
    </MeasureHead>
    {data.rows.map(([ic, name, a, b]) => (
      <MeasureRow $cols={data.cols} key={name}>
        <NameCell $pad={5}><RowIcon>{vicons[ic]}</RowIcon>{name}</NameCell>
        <ValueCell $pad={data.pads[0]}>{a}</ValueCell>
        <ValueCell $pad={data.pads[1]}>{b}</ValueCell>
      </MeasureRow>
    ))}
    <MeasureRow $cols={data.cols}>
      <NameCell $pad={5} /><ValueCell $pad={7} /><ValueCell $pad={7} />
    </MeasureRow>
  </MeasureGrid>
)
const Cursors = ({ sel, values, head }) => (
  <CursorGrid $head={head}>
    {['Domain', 'Left', 'Right', 'Difference', '1/Difference'].map((t, i) => (
      <CursorCell $head $sel={sel && i === 0} key={t}>{t}</CursorCell>
    ))}
    {values.map((t, i) => <CursorCell key={i}>{t}</CursorCell>)}
  </CursorGrid>
)
const Title = ({ text }) => (
  <WinTitle>
    <AppLogo />
    {text}
    <WinClose width="12" height="12" viewBox="0 0 12 12"><path stroke="#777" d="M1 1l10 10M11 1L1 11" /></WinClose>
  </WinTitle>
)
const Btns = ({ list, on = [] }) => list.map(k => (
  <WinBtn $on={on.includes(k)} key={k}>{vicons[k]}</WinBtn>
))

export default function App() {
  return (
    <Shell>
      <GlobalStyle />
      <TitleStrip />
      <TopBlock>
        <TopBars>
          <MenuBar>
            <MenuItem $w={34}>File</MenuItem>
            <MenuItem $w={79}>Instruments</MenuItem>
            <MenuItem $w={41}>View</MenuItem>
            <MenuItem $w={100}>Quick functions</MenuItem>
            <MenuItem $w={43}>Tools</MenuItem>
            <MenuItem $w={40}>Help</MenuItem>
          </MenuBar>
          <Bar $h={34} $pad={4}>
            <Tool>{icons.open}</Tool>
            <Tool>{icons.saveChart}</Tool>
            <Tool>{icons.save}</Tool>
            <Tool>{icons.refresh}</Tool>
            <Tool><RedX /></Tool>
            <Tool>{icons.print}</Tool>
            <Sep $r={8} />
            <Tool $on>{icons.nodes}</Tool>
            <Sep $l={1} $r={8} />
            <Tool>{icons.plus}</Tool>
            <Tool>{icons.yt}</Tool>
            <Tool>{icons.xy}</Tool>
            <Tool>{icons.fft}</Tool>
            <Sep $r={4} />
            <Tool>{icons.lines}</Tool>
            <Sep $r={4} />
            <Tool>{icons.seg}</Tool>
            <Tool>{icons.canC}</Tool>
            <Tool>{icons.i2c}</Tool>
            <Tool>{icons.serial}</Tool>
            <Sep $r={8} />
            <Tool>{icons.sigma}</Tool>
            <Sep $r={4} />
            <Tool>{icons.palette}</Tool>
            <Tool>{icons.chanList}</Tool>
          </Bar>
        </TopBars>
        <LogoPanel>
          <LogoText>TiePie</LogoText>
          <I w={42} h={48}>
            <path fill="#fff" stroke="#888" strokeWidth="2" d="M13 1H27L41 13V35L27 47H13L1 35V13z" />
            <circle cx="20" cy="24" r="12" fill="#aaa" />
            <path stroke="#888" d="M10 24h20M20 12v24" />
            <text x="13" y="11" fontSize="8" fill="#e02222">Tie</text>
            <text x="9" y="44" fontSize="6" fill="#e02222">engine</text>
          </I>
        </LogoPanel>
      </TopBlock>
      <Bar $h={41} $pad={7}>
        <Tool $w={30}>{icons.stop}</Tool>
        <Tool>{icons.play}</Tool>
        <Tool>{icons.bigA}</Tool>
        <Sep $l={1.5} $r={4} />
        <Tool $w={28}>{icons.left}</Tool>
        <Stack $w={54}>102.4<br />ms/div</Stack>
        <Tool $w={28}>{icons.right}</Tool>
        <Sep $l={2} $r={15} />
        <Stack $w={66} $align="left">97.656 kHz</Stack>
        <Stack $w={45} $align="left">100 kSa</Stack>
        <Sep $r={7} />
        <Tool $w={24}><ScopeT /></Tool>
        <Stack $w={66} $ml={8}>Pre samples:<br />0 %</Stack>
        <Tool $w={33} $ml={4}><ScopeT blue /></Tool>
        <Sep $l={1} $r={6} />
        <Stack $w={43}>Trigger:<br />Ch1</Stack>
        <Tool $w={36}>{icons.slope}</Tool>
        <Sep $r={4} />
        <Tool $w={26}><WinIcon /></Tool>
      </Bar>
      <Bar $h={41} $pad={6}>
        <Tool><Knob c="#00d800" /></Tool>
        <Stack $w={25} $align="left">Ch1</Stack>
        <Tool $on>{icons.wave}</Tool>
        <Tool $on><ARIcon /></Tool>
        <Tool $w={33}><TriDown /></Tool>
        <Stack $w={44}>Range:<br />2 V</Stack>
        <Tool $w={34}><TriUp /></Tool>
        <Sep $r={8} />
        <Stack $w={38} $align="left">Probe:<br />x1</Stack>
        <Sep $l={3} $r={8} />
        <Tool $w={24}><WinIcon /></Tool>
        <Fill />
        <RightChannel>
          <Tool><Knob c="#00e8f0" /></Tool>
          <Stack $w={27} $align="left">Ch2</Stack>
          <Tool $w={27}>{icons.fold}</Tool>
          <Tool $on><ARIcon /></Tool>
          <Tool $w={31}><TriDown /></Tool>
          <Stack $w={44}>Range:<br />80 V</Stack>
          <Tool $w={34}><TriUp off /></Tool>
          <Sep $r={8} />
          <Stack $w={38} $align="left">Probe:<br />x1</Stack>
          <Sep $l={3} $r={7} />
          <Tool $w={24}><WinIcon /></Tool>
        </RightChannel>
      </Bar>
      <Body>
        <TreePane>
          {treeRows.map((row, i) => (
            <TreeRow key={i}>
              <Guide w={row.w} lines={row.lines} box={row.box} />
              {row.icon}
              <TreeLabel $ml={row.ml} $bold={row.bold}>{row.text}</TreeLabel>
            </TreeRow>
          ))}
        </TreePane>
        <Splitter>
          <SplitterArrow />
          <SplitterBar />
        </Splitter>
        <GraphFrame $w={854} $bl={2}>
          <GraphMain $pad={1} $bg="#f0f0f0">
            <AxisColumn w={103} cols="41px 46px" gap={12} blocks="52px 47px" top={['1.7064', '0.17064']} bottom={['-1.7746', '-0.17746']} scale={leftScale}>
              <Bracket />
            </AxisColumn>
            <PlotCol>
              <GraphToolbar $pad={4} $w={748}>
                <Tool $w={30} $on>{icons.scope0}</Tool>
                <Sep $l={4} $r={2} />
                <Tool><Legend /></Tool>
                <Sep $l={2} $r={4} />
                <Tool $w={30} $on><TableIcon /></Tool>
                <Tool $w={32}>{icons.vLines}</Tool>
                <Tool $w={30} $on>{icons.hLines}</Tool>
                <Tool $w={33}>{icons.boxLines}</Tool>
                <Sep $l={2} $r={2} />
                <Tool><Zoom label="+" /></Tool>
                <Tool><Zoom label="−" /></Tool>
                <Tool><Zoom label="1:1" /></Tool>
                <Sep $r={4} />
                <Tool><Eye /></Tool>
              </GraphToolbar>
              <PlotWrap $w={707}><TimePlot /></PlotWrap>
              <Scroll $w={707} $bg="#a0a0a0">
                <ScrollBtn $w={16}><Tri $dir="l" /></ScrollBtn>
                <ScrollThumb $w={25} $ml={102} />
                <Fill />
                <ScrollBtn $w={15}><Tri $dir="r" /></ScrollBtn>
                <MouseCursor width="12" height="15" viewBox="0 0 12 15"><path fill="#111" stroke="#fff" d="M6 1l5 6H7.5v4h-3V7H1z" /></MouseCursor>
              </Scroll>
            </PlotCol>
          </GraphMain>
          <TimeStrip $ml={1} $pad={68} $w={850}>
            {leftTimes.map(t => <TimeLabel $w={70.8} key={t}>{t}</TimeLabel>)}
          </TimeStrip>
        </GraphFrame>
        <GraphFrame $bl={3}>
          <GraphMain $pad={5} $bg="linear-gradient(90deg, #aaa 2px, #fff 2px)">
            <AxisColumn w={100} cols="47px 47px" gap={3} blocks="47px 49px" top={['20.000', '20.000']} bottom={['-100.000', '-100.000']} scale={rightScale} />
            <PlotCol>
              <GraphToolbar $pad={6} $w={712}>
                <Tool $w={29} $on>{icons.bars}</Tool>
                <Sep $l={3} $r={5} />
                <Tool $w={27}><Legend /></Tool>
                <Sep $l={3} $r={3} />
                <Tool $on><TableIcon /></Tool>
                <Tool $on>{icons.vLines}</Tool>
                <Tool $w={31}>{icons.hLines}</Tool>
                <Tool $w={31}>{icons.boxLines}</Tool>
                <Sep $l={3} $r={2} />
                <Tool><Zoom label="+" /></Tool>
                <Tool><Zoom off label="−" /></Tool>
                <Tool><Zoom off label="1:1" /></Tool>
                <Sep $l={2} $r={4} />
                <Tool><Eye /></Tool>
                <Fill />
                <Tool>{icons.comment}</Tool>
                <Tool>{icons.greyX}</Tool>
                <Sep $l={2.5} $r={3} />
                <Tool>{icons.chList}</Tool>
                <Tool>{icons.waves}</Tool>
                <Tool>{icons.winArrow}</Tool>
                <Tool>{icons.eraser}</Tool>
                <Tool><RedX /></Tool>
                <Stack $w={13} $align="left"><b>2</b></Stack>
              </GraphToolbar>
              <PlotWrap $w={712}><FftPlot /></PlotWrap>
              <Scroll $w={712} $bg="#f0f0f0">
                <ScrollBtn $w={15}><Tri $dir="l" /></ScrollBtn>
                <Fill />
                <ScrollBtn $w={15}><Tri $dir="r" /></ScrollBtn>
                <Tick $x={391} />
                <Tick $x={588} />
              </Scroll>
            </PlotCol>
          </GraphMain>
          <TimeStrip $ml={5} $pad={27} $w={827}>
            {rightTimes.map(t => <TimeLabel $w={152} key={t}>{t}</TimeLabel>)}
            <TimeLabel $w={40} $align="left">48.83 kHz</TimeLabel>
          </TimeStrip>
        </GraphFrame>
      </Body>

      <ValueWin $x={645} $y={2} $w={521} $h={251}>
        <Title text="Value window of graph 1" />
        <WinBar $h={26}>
          <Dots $r={7} />
          <Btns list={['check', 'clip', 'kbd', 'pin', 'res']} on={['kbd', 'pin']} />
          <Sep $l={1} $r={2} />
          <Dots $r={5} />
          <Btns list={['curL', 'curR', 'curLR', 'curT', 'curB', 'curTB', 'slope']} on={['curTB']} />
        </WinBar>
        <WinBar $h={27}>
          <Dots $r={3} />
          <Btns list={['level', 'max', 'min', 'maxmin', 'rms', 'mean', 'sigma2', 'sigma', 'freq', 'period', 'duty', 'dutyN', 'pulseT', 'pulseB', 'sine', 'rise', 'fall', 'slew', 'power', 'spectrum', 'burst', 'squares']} on={['maxmin', 'rms', 'freq']} />
        </WinBar>
        <Measurements data={TEXT_ROWS.one} h={114} />
        <WinSplit />
        <Cursors sel head={26} values={['Time', '0 s', '1.0240 s', '1.0240 s', '976.6 mHz']} />
      </ValueWin>

      <ValueWin $x={489} $y={365} $w={520} $h={206}>
        <Title text="Value window of graph 2" />
        <WinBar $h={27}>
          <Dots $r={4.5} />
          <Btns list={['check', 'clip', 'kbd', 'pin', 'res']} on={['kbd', 'pin']} />
          <Sep $l={1.5} $r={2} />
          <Dots $r={5.5} />
          <Btns list={['curL', 'curR', 'curLR', 'curT', 'curB', 'curTB']} on={['curT']} />
          <Sep $l={1.5} $r={2} />
          <Dots $r={4.5} />
          <Btns list={['level', 'max', 'min', 'maxmin', 'mean', 'thd']} on={['mean', 'thd']} />
        </WinBar>
        <Measurements data={TEXT_ROWS.two} h={96} />
        <WinSplit />
        <Cursors head={25} values={['Frequency', '374 Hz', '8.79 kHz', '8.415 kHz', '-']} />
      </ValueWin>
    </Shell>
  )
}
